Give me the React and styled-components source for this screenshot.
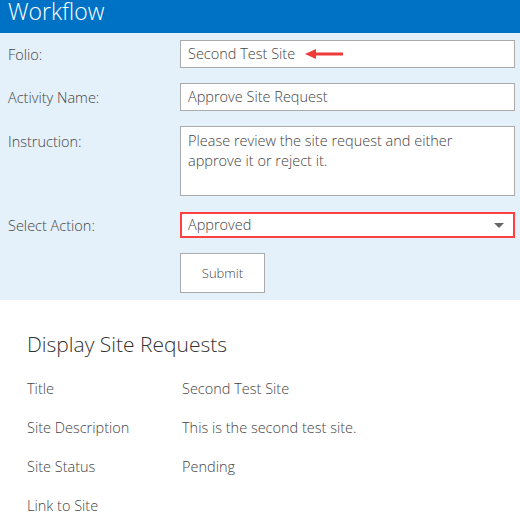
import React from 'react';
import styled, { createGlobalStyle } from 'styled-components';

const PageStyle = createGlobalStyle`
  body {
    margin: 0;
    background: #ffffff;
    font-family: "Open Sans", "Noto Sans", sans-serif;
    font-weight: 300;
    color: #444444;
  }
`;

const Header = styled.div`
  background: #0072c6;
  height: 33px;
  overflow: hidden;
  color: #ffffff;
  font-size: 23px;
  line-height: 22px;
  padding-left: 8px;
`;

const FormPanel = styled.div`
  background: #e4f0fa;
  padding: 7px 5px 7px 8px;
  display: flex;
  flex-direction: column;
`;

const Row = styled.div`
  display: grid;
  grid-template-columns: 172px 1fr;
  align-items: ${p => (p.top ? 'start' : 'center')};
  margin-bottom: ${p => p.gap ?? 15}px;
`;

const Label = styled.div`
  font-size: 14.5px;
  padding-top: ${p => (p.top ? 6 : 0)}px;
`;

const Field = styled.div`
  box-sizing: border-box;
  background: #ffffff;
  border: 1px solid #ababab;
  height: ${p => p.h || 28}px;
  padding: 4px ${p => (p.multi ? 40 : 7)}px 4px 7px;
  font-size: 14.5px;
  line-height: 20px;
  color: #444444;
  display: flex;
  align-items: ${p => (p.multi ? 'flex-start' : 'center')};
  gap: 10px;
`;

const Select = styled(Field)`
  border: 2px solid #ff4040;
  height: 26px;
  padding: 0 6px;
  justify-content: space-between;
`;

const Caret = styled.span`
  width: 0;
  height: 0;
  border-left: 5px solid transparent;
  border-right: 5px solid transparent;
  border-top: 5px solid #666666;
  margin-right: 3px;
`;

const Button = styled.button`
  box-sizing: border-box;
  width: 85px;
  height: 40px;
  background: #ffffff;
  border: 1px solid #ababab;
  font-family: inherit;
  font-weight: 300;
  font-size: 13px;
  color: #444444;
  grid-column: 2;
`;

const Display = styled.div`
  padding: 30px 0 0 27px;
`;

const Title = styled.div`
  font-size: 21px;
  color: #333333;
  margin-bottom: 21px;
`;

const InfoRow = styled.div`
  display: grid;
  grid-template-columns: 155px 1fr;
  font-size: 14.5px;
  height: 39px;
  color: #444444;
`;

const Arrow = () => (
  <svg width="38" height="10" viewBox="0 0 38 10">
    <path d="M37 5H8" stroke="#f03a3a" strokeWidth="3" strokeLinecap="round" />
    <path d="M0 5L11 0V10Z" fill="#f03a3a" />
  </svg>
);

const info = [
  ['Title', 'Second Test Site'],
  ['Site Description', 'This is the second test site.'],
  ['Site Status', 'Pending'],
  ['Link to Site', ''],
];

export default function App() {
  return (
    <>
      <PageStyle />
      <Header>Workflow</Header>
      <FormPanel>
        <Row>
          <Label>Folio:</Label>
          <Field>Second Test Site <Arrow /></Field>
        </Row>
        <Row>
          <Label>Activity Name:</Label>
          <Field>Approve Site Request</Field>
        </Row>
        <Row top gap={16}>
          <Label top>Instruction:</Label>
          <Field multi h={70}>Please review the site request and either approve it or reject it.</Field>
        </Row>
        <Row gap={15}>
          <Label>Select Action:</Label>
          <Select>Approved <Caret /></Select>
        </Row>
        <Row gap={0}>
          <Button>Submit</Button>
        </Row>
      </FormPanel>
      <Display>
        <Title>Display Site Requests</Title>
        {info.map(([k, v]) => (
          <InfoRow key={k}>
            <span>{k}</span>
            <span>{v}</span>
          </InfoRow>
        ))}
      </Display>
    </>
  );
}
